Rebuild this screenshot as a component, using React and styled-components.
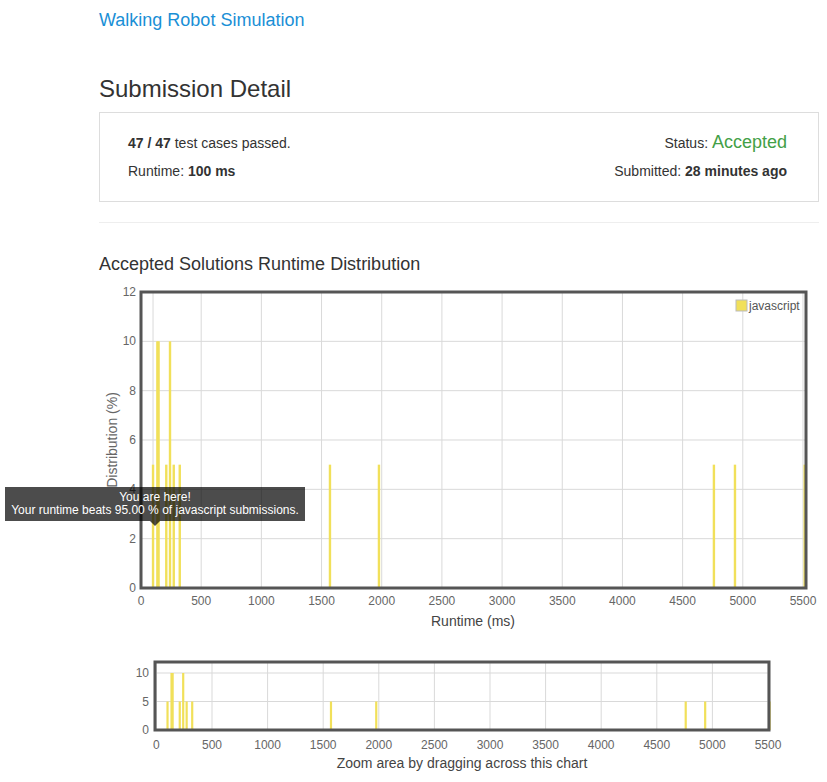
import React from 'react'
import styled, { createGlobalStyle } from 'styled-components'

const GlobalStyle = createGlobalStyle`
  body {
    margin: 0;
    background: #fff;
    font-family: "Liberation Sans", Arial, Helvetica, sans-serif;
    color: #333;
  }
`

const BAR = '#f1e05a'
const GRID = '#d9d9d9'
const AXIS = '#555'
const LABEL = '#666'

// runtime (ms), share of submissions (%)
const runtimes = [
  [100, 5], [136, 10], [146, 10], [210, 5], [241, 10], [272, 5], [322, 5],
  [1570, 5], [1977, 5], [4760, 5], [4935, 5], [5514, 5],
]

const Container = styled.div`
  width: 720px;
  margin-left: 99px;
  padding-top: 10px;
`

const ProblemLink = styled.a`
  display: block;
  font-size: 18px;
  line-height: 20px;
  color: #1a8fd6;
  text-decoration: none;
`

const Title = styled.h3`
  margin: 46px 0 0;
  font-size: 24px;
  line-height: 26px;
  font-weight: 400;
  color: #333;
`

const Panel = styled.div`
  margin-top: 10px;
  border: 1px solid #ddd;
  padding: 20px 31px 20px 28px;
  display: grid;
  grid-template-columns: 1fr auto;
  row-gap: 8px;
`

const Cell = styled.div`
  font-size: 14px;
  line-height: 20px;
  color: #333;
  text-align: ${p => (p.right ? 'right' : 'left')};
`

const Accepted = styled.span`
  font-size: 18px;
  line-height: 18px;
  color: #43a047;
`

const Divider = styled.hr`
  margin: 20px 0 0;
  border: 0;
  border-top: 1px solid #eee;
`

const SectionTitle = styled.h4`
  margin: 30px 0 0;
  font-size: 18px;
  line-height: 22px;
  font-weight: 400;
  color: #333;
`

const ChartWrap = styled.div`
  position: relative;
  margin-top: ${p => p.gap}px;
  height: ${p => p.height}px;
  svg {
    display: block;
    font-family: "Liberation Sans", Arial, sans-serif;
  }
`

const Tooltip = styled.div`
  position: absolute;
  left: -94px;
  top: 205px;
  width: 300px;
  box-sizing: border-box;
  padding: 4px 0;
  background: rgba(0, 0, 0, 0.7);
  color: #fff;
  font-size: 12px;
  line-height: 13px;
  text-align: center;
  white-space: nowrap;
  &::after {
    content: '';
    position: absolute;
    left: 145px;
    bottom: -5px;
    border-left: 5px solid transparent;
    border-right: 5px solid transparent;
    border-top: 5px solid rgba(0, 0, 0, 0.7);
  }
`

const xTicks = Array.from({ length: 12 }, (_, i) => i * 500)

function RuntimeChart({ spec, children }) {
  const { w, h, l, r, t, b, x0, k, yTicks, unit, barW, labelX, xLabelY, tickLines } = spec
  const sx = ms => x0 + ms * k
  const sy = v => b - v * unit
  return (
    <svg width={w} height={h}>
      {yTicks.map(v => (
        <line key={'gy' + v} x1={l} x2={r} y1={sy(v)} y2={sy(v)} stroke={GRID} />
      ))}
      {xTicks.concat(tickLines || []).map(ms => (
        <line key={'gx' + ms} x1={sx(ms)} x2={sx(ms)} y1={t} y2={b} stroke={GRID} />
      ))}
      {runtimes.map(([ms, v]) => (
        <rect key={ms} x={sx(ms) - barW / 2} y={sy(v)} width={barW} height={b - sy(v)} fill={BAR} />
      ))}
      <rect x={l} y={t} width={r - l} height={b - t} fill="none" stroke={AXIS} strokeWidth="3" />
      {yTicks.map(v => (
        <text key={'ly' + v} x={labelX} y={sy(v) + 4} fontSize="12" fill={LABEL} textAnchor="end">
          {v}
        </text>
      ))}
      {xTicks.map(ms => (
        <text key={'lx' + ms} x={sx(ms)} y={xLabelY} fontSize="12" fill={LABEL} textAnchor="middle">
          {ms}
        </text>
      ))}
      {children}
    </svg>
  )
}

const mainSpec = {
  w: 720, h: 350, l: 42, r: 707, t: 10, b: 306,
  x0: 42, k: 60.18 / 500, unit: 24.667, barW: 2.4,
  yTicks: [0, 2, 4, 6, 8, 10, 12], labelX: 37, xLabelY: 323, tickLines: [100],
}

const navSpec = {
  w: 720, h: 125, l: 56, r: 670, t: 7, b: 75,
  x0: 57.4, k: 55.6 / 500, unit: 5.7, barW: 2.2,
  yTicks: [0, 5, 10], labelX: 50, xLabelY: 94,
}

export default function App() {
  return (
    <>
      <GlobalStyle />
      <Container>
        <ProblemLink href="#">Walking Robot Simulation</ProblemLink>
        <Title>Submission Detail</Title>
        <Panel>
          <Cell><b>47 / 47</b> test cases passed.</Cell>
          <Cell right>Status: <Accepted>Accepted</Accepted></Cell>
          <Cell>Runtime: <b>100 ms</b></Cell>
          <Cell right>Submitted: <b>28 minutes ago</b></Cell>
        </Panel>
        <Divider />
        <SectionTitle>Accepted Solutions Runtime Distribution</SectionTitle>
        <ChartWrap gap={7} height={350}>
          <RuntimeChart spec={mainSpec}>
            <rect x="637" y="18" width="11" height="11" fill={BAR} stroke="#bbb" />
            <text x="650" y="28" fontSize="12" fill="#555">javascript</text>
            <text
              x="14" y="158" fontSize="14" fill={LABEL} textAnchor="middle"
              transform="rotate(-90 14 158)" dominantBaseline="middle"
            >
              Distribution (%)
            </text>
            <text x="374" y="344" fontSize="14" fill="#444" textAnchor="middle">Runtime (ms)</text>
          </RuntimeChart>
          <Tooltip>
            You are here!
            <br />
            Your runtime beats 95.00 % of javascript submissions.
          </Tooltip>
        </ChartWrap>
        <ChartWrap gap={23} height={125}>
          <RuntimeChart spec={navSpec}>
            <text x="363" y="113" fontSize="14" fill="#444" textAnchor="middle">
              Zoom area by dragging across this chart
            </text>
          </RuntimeChart>
        </ChartWrap>
      </Container>
    </>
  )
}
